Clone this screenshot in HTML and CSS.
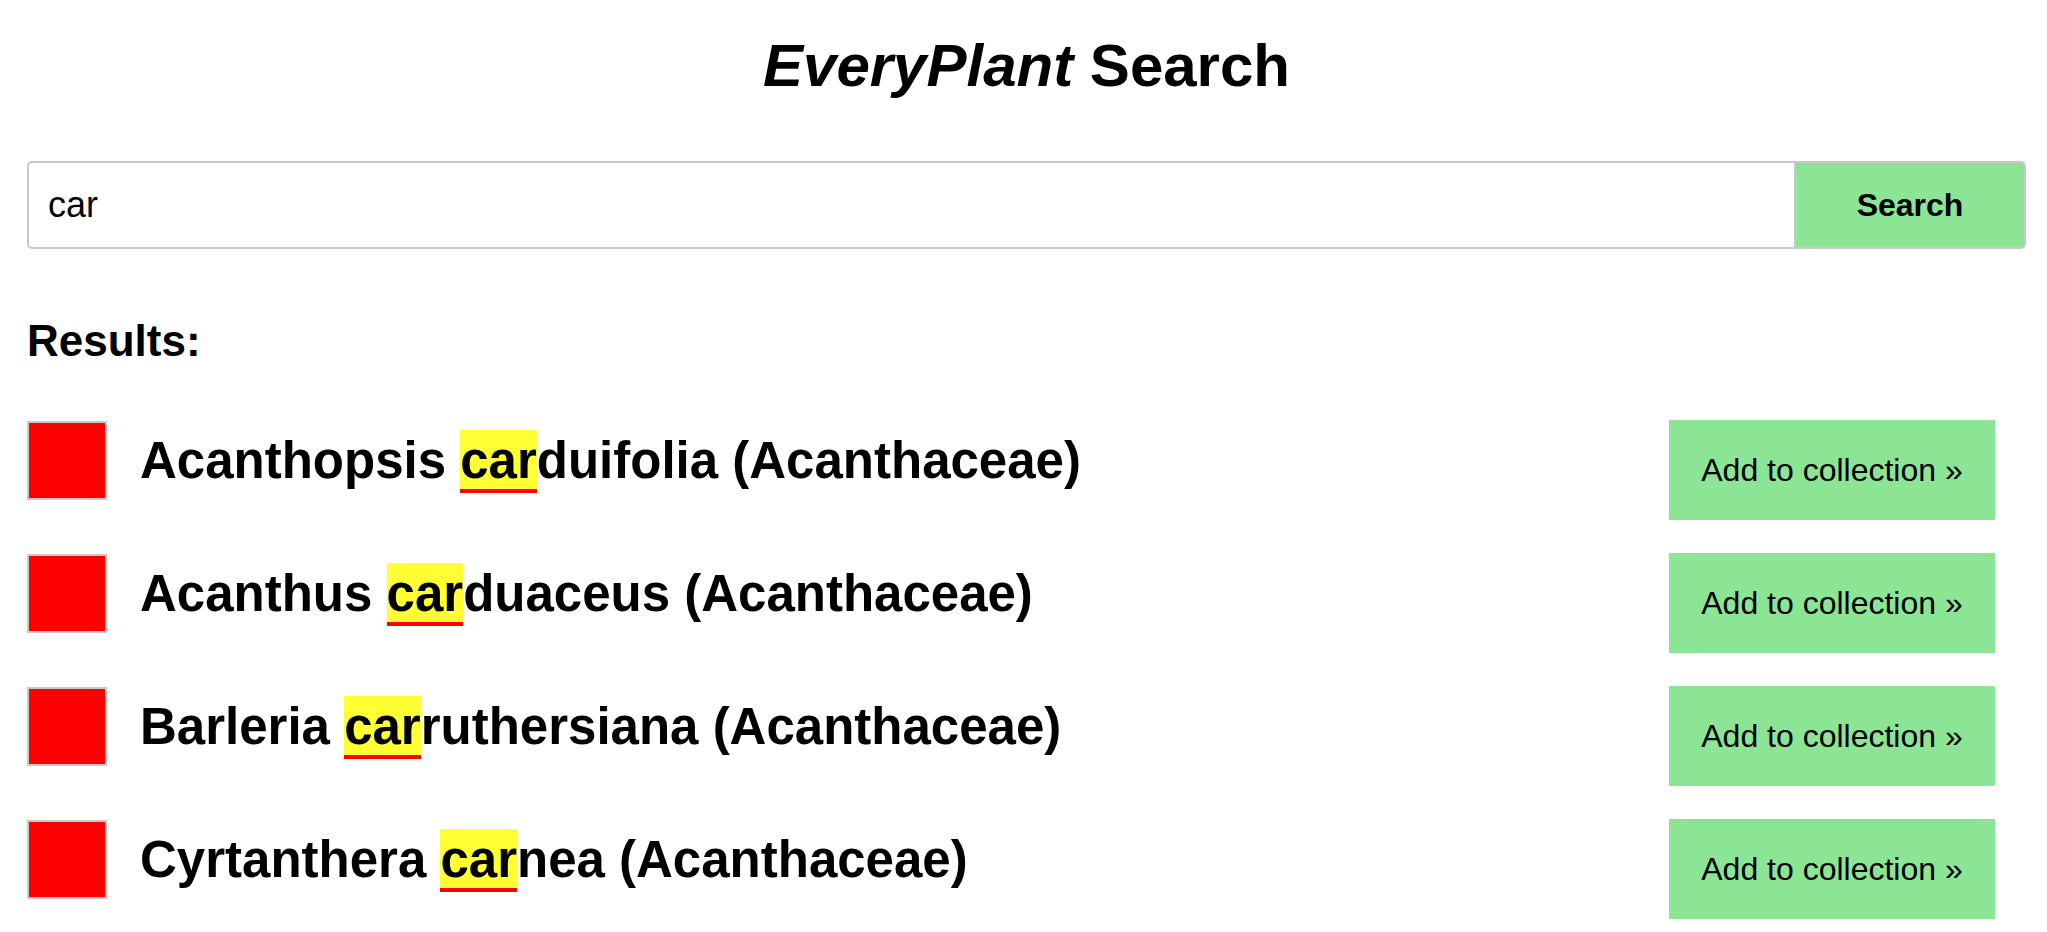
FILE: index.html
```html
<!DOCTYPE html>
<html lang="en">
<head>
<meta charset="utf-8">
<title>EveryPlant Search</title>
<link rel="stylesheet" href="styles.css">
</head>
<body>
<main class="page">
  <h1 class="title"><em>EveryPlant</em> Search</h1>
  <form class="search">
    <input class="search-input" type="text" value="car">
    <button class="search-button" type="button">Search</button>
  </form>
  <h2 class="results-heading">Results:</h2>
  <ul class="results">
    <li class="result">
      <span class="swatch"></span>
      <span class="name">Acanthopsis <mark class="hit">car</mark>duifolia (Acanthaceae)</span>
      <button class="add" type="button">Add to collection &raquo;</button>
    </li>
    <li class="result">
      <span class="swatch"></span>
      <span class="name">Acanthus <mark class="hit">car</mark>duaceus (Acanthaceae)</span>
      <button class="add" type="button">Add to collection &raquo;</button>
    </li>
    <li class="result">
      <span class="swatch"></span>
      <span class="name">Barleria <mark class="hit">car</mark>ruthersiana (Acanthaceae)</span>
      <button class="add" type="button">Add to collection &raquo;</button>
    </li>
    <li class="result">
      <span class="swatch"></span>
      <span class="name">Cyrtanthera <mark class="hit">car</mark>nea (Acanthaceae)</span>
      <button class="add" type="button">Add to collection &raquo;</button>
    </li>
  </ul>
</main>
</body>
</html>
```
FILE: styles.css
```css
html, body {
  margin: 0;
  padding: 0;
  background: #ffffff;
}

body {
  font-family: "Liberation Sans", Arial, Helvetica, sans-serif;
  color: #000000;
}

.page {
  padding: 31px 21px 0 27px;
}

.title {
  margin: 0;
  font-size: 60px;
  line-height: 69px;
  font-weight: 700;
  text-align: center;
}

.title em {
  font-style: italic;
}

.search {
  display: flex;
  margin: 61px 0 0 0;
  height: 88px;
}

.search-input {
  flex: 1;
  box-sizing: border-box;
  height: 88px;
  margin: 0;
  padding: 0 18px 0 19px;
  border: 2px solid #c8c8c8;
  border-radius: 5px 0 0 5px;
  font-family: "Liberation Sans", Arial, Helvetica, sans-serif;
  font-size: 36px;
  color: #000000;
  background: #ffffff;
  outline: none;
}

.search-button {
  box-sizing: border-box;
  width: 230px;
  height: 88px;
  margin: 0;
  padding: 0;
  border: 2px solid #c8c8c8;
  border-left: none;
  border-radius: 0 5px 5px 0;
  background: #8ce594;
  font-family: "Liberation Sans", Arial, Helvetica, sans-serif;
  font-size: 32px;
  font-weight: 700;
  color: #000000;
}

.results-heading {
  margin: 66px 0 0 0;
  font-size: 44px;
  line-height: 51px;
  font-weight: 700;
}

.results {
  list-style: none;
  margin: 54px 0 0 0;
  padding: 0 31px 0 0;
  display: flex;
  flex-direction: column;
  gap: 33px;
}

.result {
  display: flex;
  align-items: flex-start;
  height: 100px;
}

.swatch {
  flex: none;
  box-sizing: border-box;
  width: 80px;
  height: 79px;
  margin-top: 1px;
  background: #ff0000;
  border: 2px solid #c8c8c8;
}

.name {
  flex: 1;
  margin: 12px 0 0 33px;
  font-size: 51px;
  line-height: 58px;
  font-weight: 700;
  white-space: nowrap;
}

.hit {
  background: #ffff33;
  color: #000000;
  padding-top: 2px;
  border-bottom: 4px solid #ff0000;
}

.add {
  flex: none;
  box-sizing: border-box;
  width: 326px;
  height: 100px;
  margin: 0;
  padding: 0;
  border: none;
  background: #8ce594;
  font-family: "Liberation Sans", Arial, Helvetica, sans-serif;
  font-size: 32px;
  font-weight: 400;
  line-height: 100px;
  color: #000000;
  text-align: center;
}
```
